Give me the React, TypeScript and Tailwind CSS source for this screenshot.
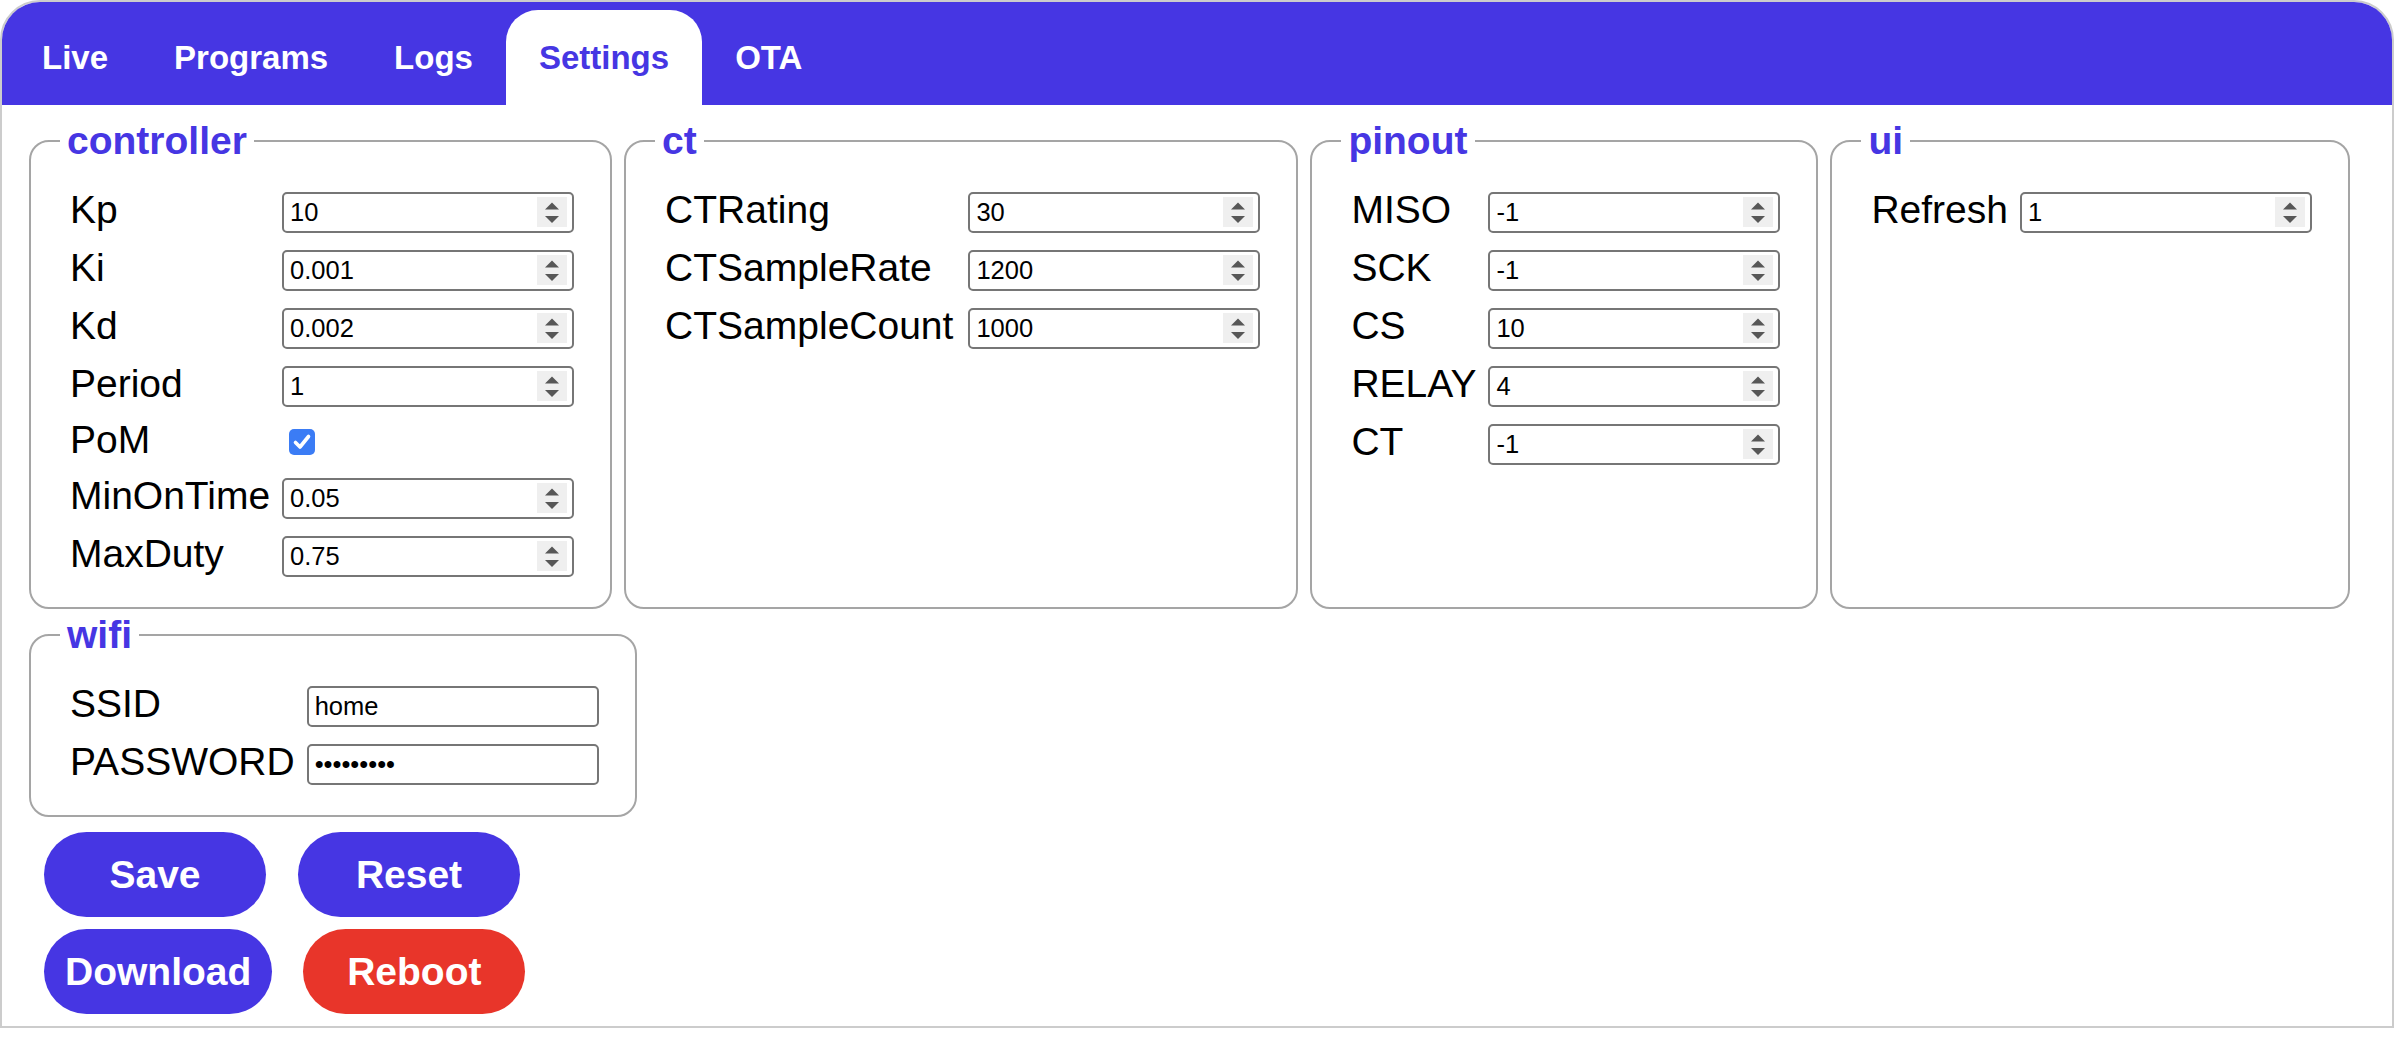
import React from "react";

function Spinner() {
  return (
    <svg width="30" height="30" viewBox="0 0 30 30" className="mr-[5px] shrink-0">
      <rect x="0" y="0" width="30" height="30" fill="#efefef" />
      <polygon points="8,12.5 22,12.5 15,5.5" fill="#575757" />
      <polygon points="8,19 22,19 15,26" fill="#575757" />
    </svg>
  );
}

function NumInput({ value }: { value: string }) {
  return (
    <div className="flex h-[41px] w-[292px] items-center rounded-[5px] border-2 border-[#767676] bg-white">
      <input
        type="text"
        defaultValue={value}
        readOnly
        className="min-w-0 flex-1 bg-transparent pl-[6px] text-[25.5px] leading-none text-black outline-none"
      />
      <Spinner />
    </div>
  );
}

function TextInput({ value, password }: { value: string; password?: boolean }) {
  return (
    <div className="flex h-[41px] w-[292px] items-center rounded-[5px] border-2 border-[#767676] bg-white">
      <input
        type={password ? "password" : "text"}
        defaultValue={value}
        readOnly
        className="min-w-0 flex-1 bg-transparent pl-[6px] text-[25.5px] leading-none text-black outline-none"
      />
    </div>
  );
}

function Checkbox() {
  return (
    <div className="ml-[7px] flex h-[26px] w-[26px] items-center justify-center rounded-[5px] bg-[#3b7cf5]">
      <svg width="26" height="26" viewBox="0 0 26 26">
        <path d="M6.5 13.5 L11 18 L19.5 7.5" fill="none" stroke="#ffffff" strokeWidth="3.6" strokeLinecap="round" strokeLinejoin="round" />
      </svg>
    </div>
  );
}

type Row = { label: string; kind: "num" | "text" | "password" | "check"; value?: string };

function Fieldset({ title, rows, wideGap }: { title: string; rows: Row[]; wideGap?: boolean }) {
  return (
    <fieldset className="min-w-0 rounded-[20px] border-2 border-[#a5a5a5] pb-[22px] pl-[29px] pr-[36px]">
      <legend className="px-[7px] text-[39px] font-bold leading-[normal] text-[#4636e3]">{title}</legend>
      <div className={wideGap ? "ml-[10px] mt-[20px] grid grid-cols-[auto_292px] gap-x-[15px]" : "ml-[10px] mt-[20px] grid grid-cols-[auto_292px] gap-x-[12px]"}>
        {rows.map((r) => (
          <React.Fragment key={r.label}>
            <div className={r.kind === "check" ? "flex h-[54px] items-center whitespace-nowrap pb-[5px] text-[39px] leading-[normal] text-black" : "flex h-[58px] items-center whitespace-nowrap pb-[5px] text-[39px] leading-[normal] text-black"}>
              {r.label}
            </div>
            <div className={r.kind === "check" ? "flex h-[54px] items-center" : "flex h-[58px] items-center"}>
              {r.kind === "num" && <NumInput value={r.value ?? ""} />}
              {r.kind === "text" && <TextInput value={r.value ?? ""} />}
              {r.kind === "password" && <TextInput value={r.value ?? ""} password />}
              {r.kind === "check" && <Checkbox />}
            </div>
          </React.Fragment>
        ))}
      </div>
    </fieldset>
  );
}

const tabs = ["Live", "Programs", "Logs", "Settings", "OTA"];

export default function App() {
  return (
    <div className="min-h-screen bg-white font-['Liberation_Sans',Arial,sans-serif]">
      <div className="overflow-hidden rounded-t-[40px] border-2 border-[#cccccc] bg-white">
        <nav className="flex h-[103px] items-end bg-[#4636e3] pl-[7px]">
          {tabs.map((t) =>
            t === "Settings" ? (
              <div key={t} className="flex h-[95px] items-center rounded-t-[32px] bg-white px-[33px] text-[33px] font-bold leading-[normal] text-[#4636e3]">
                {t}
              </div>
            ) : (
              <div key={t} className="flex h-[95px] items-center px-[33px] text-[33px] font-bold leading-[normal] text-white">
                {t}
              </div>
            )
          )}
        </nav>
        <div className="pb-[12px] pl-[27px] pt-[14px]">
          <div className="flex flex-wrap items-stretch gap-x-[12px] gap-y-[4px]">
            <Fieldset
              title="controller"
              rows={[
                { label: "Kp", kind: "num", value: "10" },
                { label: "Ki", kind: "num", value: "0.001" },
                { label: "Kd", kind: "num", value: "0.002" },
                { label: "Period", kind: "num", value: "1" },
                { label: "PoM", kind: "check" },
                { label: "MinOnTime", kind: "num", value: "0.05" },
                { label: "MaxDuty", kind: "num", value: "0.75" },
              ]}
            />
            <Fieldset
              title="ct"
              wideGap
              rows={[
                { label: "CTRating", kind: "num", value: "30" },
                { label: "CTSampleRate", kind: "num", value: "1200" },
                { label: "CTSampleCount", kind: "num", value: "1000" },
              ]}
            />
            <Fieldset
              title="pinout"
              rows={[
                { label: "MISO", kind: "num", value: "-1" },
                { label: "SCK", kind: "num", value: "-1" },
                { label: "CS", kind: "num", value: "10" },
                { label: "RELAY", kind: "num", value: "4" },
                { label: "CT", kind: "num", value: "-1" },
              ]}
            />
            <Fieldset title="ui" rows={[{ label: "Refresh", kind: "num", value: "1" }]} />
            <Fieldset
              title="wifi"
              rows={[
                { label: "SSID", kind: "text", value: "home" },
                { label: "PASSWORD", kind: "password", value: "123456789" },
              ]}
            />
          </div>
          <div className="ml-[15px] mt-[15px] flex flex-col gap-y-[12px]">
            <div className="flex gap-x-[32px]">
              <button className="h-[85px] min-w-[222px] rounded-full bg-[#4636e3] px-[21px] text-[39px] font-bold leading-[normal] text-white">Save</button>
              <button className="h-[85px] min-w-[222px] rounded-full bg-[#4636e3] px-[21px] text-[39px] font-bold leading-[normal] text-white">Reset</button>
            </div>
            <div className="flex gap-x-[31px]">
              <button className="h-[85px] min-w-[222px] rounded-full bg-[#4636e3] px-[21px] text-[39px] font-bold leading-[normal] text-white">Download</button>
              <button className="h-[85px] min-w-[222px] rounded-full bg-[#e8352a] px-[21px] text-[39px] font-bold leading-[normal] text-white">Reboot</button>
            </div>
          </div>
        </div>
      </div>
    </div>
  );
}
